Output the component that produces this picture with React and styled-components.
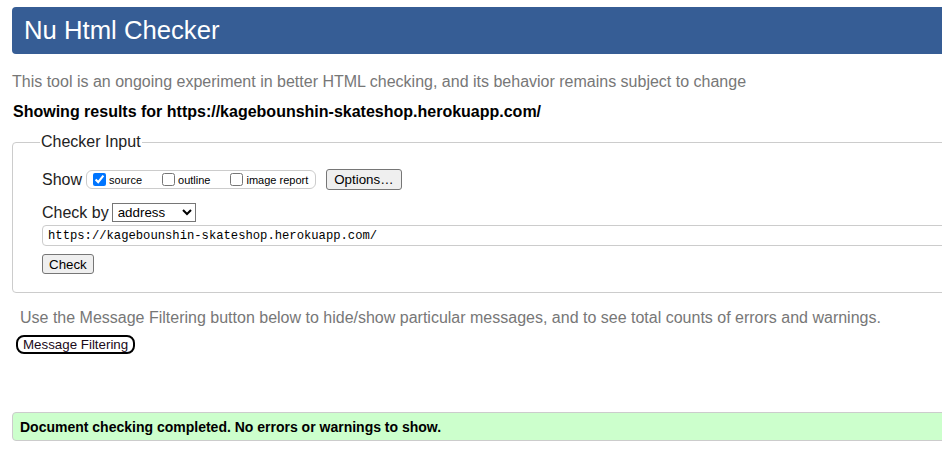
import React from 'react';
import styled, { createGlobalStyle } from 'styled-components';

const GlobalStyle = createGlobalStyle`
  html, body {
    margin: 0;
    padding: 0;
    background: #fff;
    overflow: hidden;
  }
  body {
    font-family: "Liberation Sans", Arial, sans-serif;
    color: #000;
  }
`;

const Page = styled.div`
  width: 980px;
  padding: 7px 0 0 12px;
`;

const Header = styled.header`
  height: 47px;
  background: #365d95;
  border-radius: 4px;
  display: flex;
  align-items: center;
  padding-left: 12px;
`;

const Title = styled.h1`
  margin: 0;
  font-size: 25.7px;
  font-weight: normal;
  color: #fff;
  line-height: 1;
  padding-top: 1px;
`;

const Note = styled.p`
  margin: ${p => p.$margin || '0'};
  font-size: 16px;
  line-height: 18px;
  color: #777;
`;

const Results = styled.p`
  margin: 12px 0 0 1px;
  font-size: 16px;
  line-height: 18px;
  font-weight: bold;
`;

const Fieldset = styled.fieldset`
  margin: 12px 0 0;
  padding: 18px 0 18px 29px;
  border: 1px solid #ccc;
  border-radius: 4px;
  min-width: 0;
`;

const Legend = styled.legend`
  font-size: 16px;
  line-height: 18px;
  padding: 0 1px;
  margin-left: -2px;
  color: #222;
`;

const Row = styled.div`
  display: flex;
  align-items: center;
  height: ${p => p.$h || 21}px;
  margin-top: ${p => p.$mt || 0}px;
  font-size: 16px;
`;

const RowLabel = styled.span`
  font-size: 16px;
  color: #222;
  margin-right: ${p => p.$mr || 4}px;
`;

const Group = styled.span`
  display: inline-flex;
  align-items: center;
  height: 17px;
  border: 1px solid #ccc;
  border-radius: 6px;
  padding: 0 7px 0 2px;
`;

const Option = styled.label`
  display: inline-flex;
  align-items: center;
  font-size: 11px;
  margin-right: ${p => p.$last ? 0 : 16}px;
  color: #000;

  input {
    margin: 0 3px 0 4px;
    width: 13px;
    height: 13px;
  }
`;

const Button = styled.button`
  font-family: "Liberation Sans", Arial, sans-serif;
  font-size: 13.33px;
  height: ${p => p.$h || 21}px;
  padding: 0 ${p => p.$px || 6}px;
  margin-left: ${p => p.$ml || 0}px;
  background: #efefef;
  border: 1px solid #767676;
  border-radius: 3px;
  color: #000;
`;

const Select = styled.select`
  font-family: "Liberation Sans", Arial, sans-serif;
  font-size: 13.33px;
  width: 84px;
  height: 19px;
  padding: 0 0 0 1px;
  border: 1px solid #767676;
  border-radius: 0;
  background: #fff;
  color: #000;
`;

const UrlInput = styled.input`
  display: block;
  box-sizing: border-box;
  width: 100%;
  height: 21px;
  margin-top: 2px;
  padding: 0 5px;
  border: 1px solid #ccc;
  border-radius: 4px;
  font-family: "Liberation Mono", "DejaVu Sans Mono", monospace;
  font-size: 12.2px;
  color: #000;
`;

const FilterButton = styled.button`
  display: block;
  margin: 8px 0 0 4px;
  height: 19px;
  padding: 0 5px;
  font-family: "Liberation Sans", Arial, sans-serif;
  font-size: 13.33px;
  color: #1a0a1a;
  background: #fff;
  border: 2px solid #000;
  border-radius: 8px;
`;

const Success = styled.div`
  margin-top: 58px;
  height: 27px;
  display: flex;
  align-items: center;
  padding-left: 7px;
  background: #ccffcc;
  border: 1px solid #ccc;
  border-radius: 4px;
  font-size: 14px;
  font-weight: bold;
`;

export default function App() {
  return (
    <Page>
      <GlobalStyle />
      <Header>
        <Title>Nu Html Checker</Title>
      </Header>
      <Note $margin="19px 0 0 0">
        This tool is an ongoing experiment in better HTML checking, and its behavior remains subject to change
      </Note>
      <Results>Showing results for https://kagebounshin-skateshop.herokuapp.com/</Results>
      <Fieldset>
        <Legend>Checker Input</Legend>
        <Row>
          <RowLabel>Show</RowLabel>
          <Group>
            <Option><input type="checkbox" defaultChecked />source</Option>
            <Option><input type="checkbox" />outline</Option>
            <Option $last><input type="checkbox" />image report</Option>
          </Group>
          <Button $ml={10} $px={7}>Options…</Button>
        </Row>
        <Row $mt={12} $h={21}>
          <RowLabel $mr={3}>Check by</RowLabel>
          <Select defaultValue="address">
            <option value="address">address</option>
            <option value="file">file upload</option>
            <option value="text">text input</option>
          </Select>
        </Row>
        <UrlInput defaultValue="https://kagebounshin-skateshop.herokuapp.com/" readOnly />
        <Row $mt={8} $h={20}>
          <Button $h={20}>Check</Button>
        </Row>
      </Fieldset>
      <Note $margin="16px 0 0 8px">
        Use the Message Filtering button below to hide/show particular messages, and to see total counts of errors and warnings.
      </Note>
      <FilterButton>Message Filtering</FilterButton>
      <Success>Document checking completed. No errors or warnings to show.</Success>
    </Page>
  );
}
